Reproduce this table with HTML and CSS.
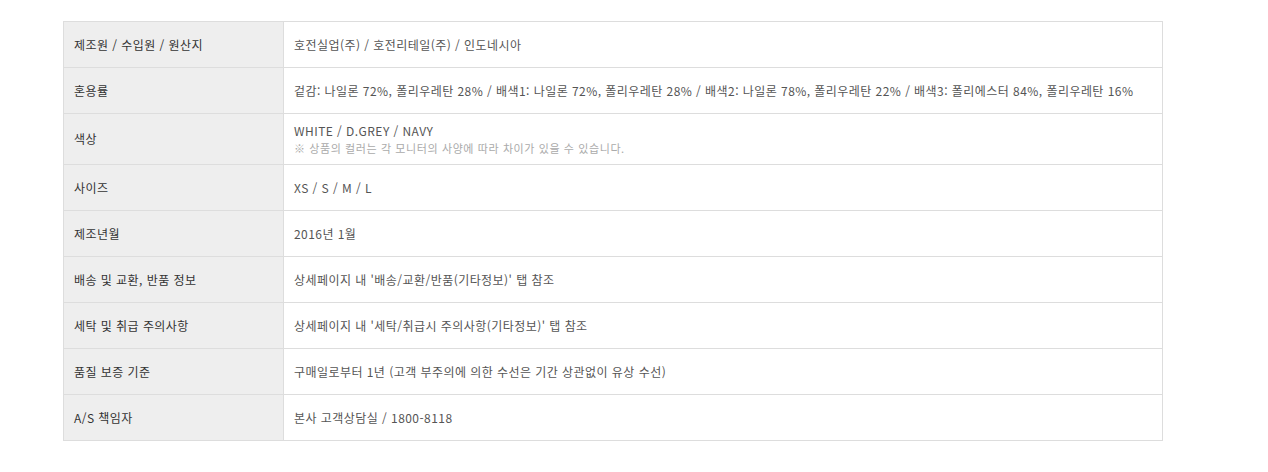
FILE: index.html
```html
<!DOCTYPE html>
<html lang="ko">
<head>
<meta charset="utf-8">
<link rel="stylesheet" href="styles.css">
</head>
<body>
<div class="wrap">
<table class="info">
  <colgroup><col class="c-label"><col></colgroup>
  <tbody>
    <tr><th>제조원 / 수입원 / 원산지</th><td>호전실업(주) / 호전리테일(주) / 인도네시아</td></tr>
    <tr><th>혼용률</th><td>겉감: 나일론 72%, 폴리우레탄 28% / 배색1: 나일론 72%, 폴리우레탄 28% / 배색2: 나일론 78%, 폴리우레탄 22% / 배색3: 폴리에스터 84%, 폴리우레탄 16%</td></tr>
    <tr class="multi"><th>색상</th><td><div class="line">WHITE / D.GREY / NAVY</div><div class="note">※ 상품의 컬러는 각 모니터의 사양에 따라 차이가 있을 수 있습니다.</div></td></tr>
    <tr><th>사이즈</th><td>XS / S / M / L</td></tr>
    <tr><th>제조년월</th><td>2016년 1월</td></tr>
    <tr><th>배송 및 교환, 반품 정보</th><td>상세페이지 내 '배송/교환/반품(기타정보)' 탭 참조</td></tr>
    <tr><th>세탁 및 취급 주의사항</th><td>상세페이지 내 '세탁/취급시 주의사항(기타정보)' 탭 참조</td></tr>
    <tr><th>품질 보증 기준</th><td>구매일로부터 1년 (고객 부주의에 의한 수선은 기간 상관없이 유상 수선)</td></tr>
    <tr><th>A/S 책임자</th><td>본사 고객상담실 / 1800-8118</td></tr>
  </tbody>
</table>
</div>
</body>
</html>
```
FILE: styles.css
```css
html, body { margin: 0; padding: 0; background: #fff; }
body {
  font-family: "Noto Sans CJK KR", "Noto Sans", sans-serif;
  font-size: 12px;
  color: #555;
}
.wrap { padding: 21px 0 0 63px; }
.info {
  width: 1100px;
  border-collapse: collapse;
  table-layout: fixed;
  border: 1px solid #dddddd;
}
.c-label { width: 220px; }
.info th, .info td {
  border: 1px solid #dddddd;
  height: 29px;
  padding: 8px 10px;
  line-height: 18px;
  text-align: left;
  vertical-align: middle;
  font-weight: normal;
  white-space: nowrap;
  letter-spacing: 0.45px;
}
.info th { background: #eeeeee; color: #333; }
.info td { background: #fff; color: #555; }
.info .multi td { height: auto; }
.line { line-height: 18px; }
.note { font-size: 11px; line-height: 16px; color: #aaa; letter-spacing: 0.6px; }
```
